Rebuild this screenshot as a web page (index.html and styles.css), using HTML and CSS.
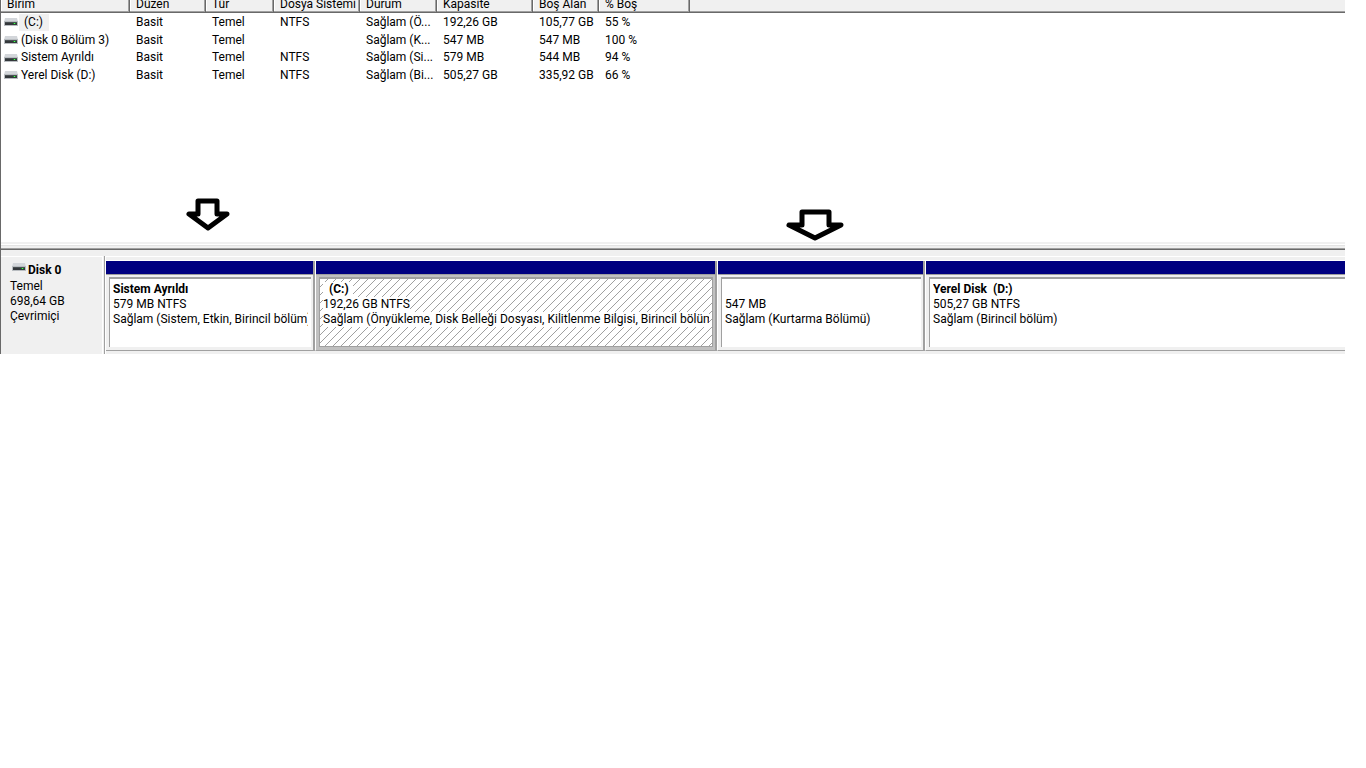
FILE: index.html
```
<!DOCTYPE html>
<html lang="tr">
<head>
<meta charset="utf-8">
<title>Disk Yönetimi</title>
<link rel="stylesheet" href="styles.css">
</head>
<body>
<svg class="defs" aria-hidden="true">
  <symbol id="drive" viewBox="0 0 14 8">
    <path d="M1 0H13L14 4H0Z" fill="#d3d6da"/>
    <path d="M0 3H14V8H0Z" fill="#b9bdc1"/>
    <path d="M1 4H13V7H1Z" fill="#34383b"/>
    <path d="M1 4H13V5H1Z" fill="#4a5053"/>
    <path d="M9 5H12V6H9Z" fill="#168a22"/>
    <path d="M10 5H11V6H10Z" fill="#4dff59"/>
  </symbol>
</svg>
<main class="manager">
  <section class="volumes">
    <table class="volume-table">
      <colgroup>
        <col class="c-name"><col class="c-layout"><col class="c-type"><col class="c-fs"><col class="c-status"><col class="c-size"><col class="c-free"><col class="c-pct"><col>
      </colgroup>
      <thead>
        <tr><th>Birim</th><th>Düzen</th><th>Tür</th><th>Dosya Sistemi</th><th>Durum</th><th>Kapasite</th><th>Boş Alan</th><th>% Boş</th><td></td></tr>
      </thead>
      <tbody>
        <tr><td><span class="volume"><svg class="drive"><use href="#drive"/></svg><span class="name selected">(C:)</span></span></td><td>Basit</td><td>Temel</td><td>NTFS</td><td>Sağlam (Ö...</td><td>192,26 GB</td><td>105,77 GB</td><td>55 %</td><td></td></tr>
        <tr><td><span class="volume"><svg class="drive"><use href="#drive"/></svg><span class="name">(Disk 0 Bölüm 3)</span></span></td><td>Basit</td><td>Temel</td><td></td><td>Sağlam (K...</td><td>547 MB</td><td>547 MB</td><td>100 %</td><td></td></tr>
        <tr><td><span class="volume"><svg class="drive"><use href="#drive"/></svg><span class="name">Sistem Ayrıldı</span></span></td><td>Basit</td><td>Temel</td><td>NTFS</td><td>Sağlam (Si...</td><td>579 MB</td><td>544 MB</td><td>94 %</td><td></td></tr>
        <tr><td><span class="volume"><svg class="drive"><use href="#drive"/></svg><span class="name">Yerel Disk (D:)</span></span></td><td>Basit</td><td>Temel</td><td>NTFS</td><td>Sağlam (Bi...</td><td>505,27 GB</td><td>335,92 GB</td><td>66 %</td><td></td></tr>
      </tbody>
    </table>
    <svg class="arrow arrow-system" viewBox="0 0 44 34"><path d="M12 3H31V16H41L22 30L3 16H12Z"/></svg>
    <svg class="arrow arrow-recovery" viewBox="0 0 60 34"><path d="M17 4H44V17H56L30 30L4 17H17Z"/></svg>
  </section>
  <div class="splitter"></div>
  <section class="disk">
    <header class="disk-info">
      <h2><svg class="drive"><use href="#drive"/></svg>Disk 0</h2>
      <p>Temel</p>
      <p>698,64 GB</p>
      <p>Çevrimiçi</p>
    </header>
    <div class="partitions">
      <article class="partition">
        <div class="bar"></div>
        <div class="frame"><div class="content">
          <h3>Sistem Ayrıldı</h3><p>579 MB NTFS</p><p>Sağlam (Sistem, Etkin, Birincil bölüm)</p>
        </div></div>
      </article>
      <article class="partition active">
        <div class="bar"></div>
        <div class="frame"><div class="content">
          <svg class="hatch"><defs><pattern id="lines" width="8" height="8" patternUnits="userSpaceOnUse"><path d="M-1 9L9 -1" stroke="#a0a0a0" shape-rendering="crispEdges"/></pattern></defs><rect width="100%" height="100%" fill="url(#lines)"/></svg>
          <h3>(C:)</h3><p>192,26 GB NTFS</p><p>Sağlam (Önyükleme, Disk Belleği Dosyası, Kilitlenme Bilgisi, Birincil bölüm)</p>
        </div></div>
      </article>
      <article class="partition">
        <div class="bar"></div>
        <div class="frame"><div class="content">
          <h3>&nbsp;</h3><p>547 MB</p><p>Sağlam (Kurtarma Bölümü)</p>
        </div></div>
      </article>
      <article class="partition last">
        <div class="bar"></div>
        <div class="frame"><div class="content">
          <h3>Yerel Disk&nbsp; (D:)</h3><p>505,27 GB NTFS</p><p>Sağlam (Birincil bölüm)</p>
        </div></div>
      </article>
    </div>
  </section>
</main>
</body>
</html>
```
FILE: styles.css
```
* { box-sizing: border-box; }

body {
  margin: 0;
  padding-right: 21px;
  background: #fff;
  color: #000;
  font: 12px/15px Roboto, "Open Sans", sans-serif;
}

h2, h3, p { margin: 0; font-size: inherit; }

.defs { position: absolute; width: 0; height: 0; }

.drive { flex: none; width: 14px; height: 8px; }

.manager { border-left: 1px solid #696969; }

/* Volume list */
.volumes { position: relative; height: 242px; }

.volume-table {
  width: 100%;
  table-layout: fixed;
  border-collapse: separate;
  border-spacing: 0;
  white-space: nowrap;
}

.c-name { width: 129px; }
.c-layout { width: 76px; }
.c-type { width: 68px; }
.c-fs { width: 86px; }
.c-status { width: 77px; }
.c-size { width: 96px; }
.c-free { width: 66px; }
.c-pct { width: 91px; }

.volume-table th,
.volume-table td { padding: 0 0 0 6px; text-align: left; }

.volume-table thead th,
.volume-table thead td {
  height: 13px;
  padding-bottom: 4px;
  background: #f0f0f0;
  border-bottom: 1px solid #696969;
  box-shadow: inset 0 -1px #a0a0a0;
  font-weight: 400;
  line-height: 8px;
}

.volume-table thead th {
  border-right: 1px solid #696969;
  box-shadow: inset -1px -1px #a0a0a0, inset 1px 0 #fff;
}

.volume-table tbody td { height: 18px; line-height: 17px; }
.volume-table tbody tr:nth-child(3) td { height: 17px; }
.volume-table tbody td:first-child { padding-left: 3px; }

.volume { display: flex; align-items: center; }
.name { padding-left: 3px; }
.name.selected { margin-left: 1px; padding: 0 6px 0 5px; background: #f0f0f0; }

.arrow {
  position: absolute;
  fill: #fff;
  stroke: #000;
  stroke-width: 5px;
  stroke-linejoin: round;
}
.arrow-system { left: 185px; top: 198px; width: 44px; height: 34px; }
.arrow-recovery { left: 784px; top: 208px; width: 60px; height: 34px; }

.splitter {
  height: 8px;
  background: linear-gradient(#f0f0f0 2px, #fff 2px 3px, #e3e3e3 3px 4px, #f0f0f0 4px 6px, #a0a0a0 6px 7px, #696969 7px);
}

/* Disk map */
.disk {
  display: grid;
  grid-template-columns: 105px 1fr;
  padding-top: 6px;
  background: linear-gradient(#f0f0f0 6px, #fff 6px 7px, #f0f0f0 7px);
}

.disk-info {
  padding: 7px 0 0 9px;
  border-right: 1px solid #fff;
  box-shadow: inset -1px 0 #a0a0a0, inset -2px 0 #f0f0f0, inset -3px 0 #fff;
}
.disk-info h2 { display: flex; gap: 2px; padding-left: 2px; height: 16px; }

.partitions {
  display: grid;
  grid-template-columns: 210px 402px 208px minmax(0, 1fr);
  padding: 4px 0 3px;
}

.partition {
  display: flex;
  flex-direction: column;
  min-width: 0;
  border-top: 1px solid #fff;
  border-right: 1px solid #fff;
  border-bottom: 1px solid #a0a0a0;
  box-shadow: inset -2px 0 #a0a0a0;
  padding-right: 2px;
}
.partition.last { border-right: 0; padding-right: 0; box-shadow: none; }

.bar { height: 14px; background: #000080; border-bottom: 1px solid #a0a0a0; }

.frame { padding: 2px 2px 3px 3px; }

.content {
  position: relative;
  height: 70px;
  padding: 3px 3px 0;
  overflow: hidden;
  background: #fff;
  border: solid #a0a0a0;
  border-width: 2px 0 0 1px;
  white-space: nowrap;
}
.content h3, .content p { overflow: hidden; }

.last .frame { padding-right: 0; }

.active .frame { background: #c0c0c0; }
.active .content { border-width: 2px 1px 1px; }
.active h3, .active p {
  position: relative;
  width: fit-content;
  max-width: 100%;
  background: #fff;
}
.active h3 { padding: 0 4px 0 6px; }

.hatch { position: absolute; inset: 0; width: 100%; height: 100%; }
```
